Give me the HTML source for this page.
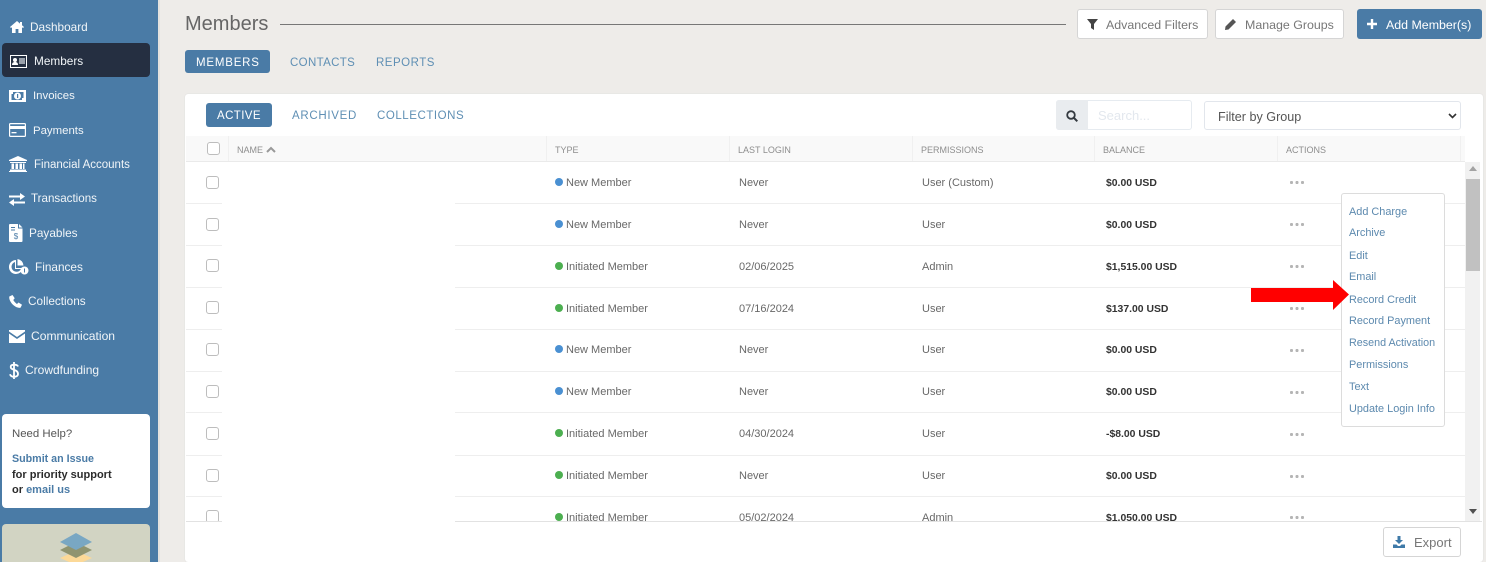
<!DOCTYPE html>
<html><head><meta charset="utf-8"><style>
html,body{margin:0;padding:0}
body{width:1486px;height:562px;overflow:hidden;position:relative;background:#eeece9;font-family:"Liberation Sans",sans-serif;color:#6b6b6b}
.a,.t{position:absolute}
.t{white-space:nowrap;line-height:16px}
svg{position:absolute;overflow:visible}
.nav{color:#f1f5f8;font-size:11.8px}
.tab{font-size:11.5px;color:#5f8fb4}
.cell{font-size:11px;color:#686868}
.bold{font-weight:bold;color:#333;font-size:10.4px;margin-top:1px}
.th{font-size:9px;color:#8e8e8e}
.line{position:absolute;left:186px;width:1279px;height:1px;background:#eeeeee}
.cb{position:absolute;width:11px;height:11px;border:1px solid #bdbdbd;border-radius:3px;background:#fff;left:206px}
.dot{position:absolute;left:555px;width:8px;height:8px;border-radius:50%}
.blue{background:#4a90d2}.green{background:#4caf50}
.dots{position:absolute;left:1290px;width:14px;height:3px;background:radial-gradient(circle at 1.5px 1.5px,#b5b5b5 1.5px,transparent 1.6px) 0 0/5.5px 3px repeat-x}
.m{font-size:10.9px;color:#5c89ae;left:1349px}
.btn{position:absolute;box-sizing:border-box;background:#fff;border:1px solid #d5d5d5;border-radius:3px}
.bt{font-size:12.4px;color:#777}
</style></head><body>
<div class="a" style="left:0;top:0;width:158px;height:562px;background:#4a7ba6"></div>
<div class="a" style="left:158px;top:0;width:2px;height:562px;background:#e4e2df"></div>
<div class="a" style="left:2px;top:43px;width:148px;height:34px;background:#252f41;border-radius:4px"></div>
<svg style="left:10px;top:21px" width="14" height="12" viewBox="0 0 14 12"><path d="M7 0L0 6l1 1 1-.8V12h3.600V8h2.800v4H12V6.200l1 .8 1-1-2-1.700V1h-2v1.600z" fill="#fff"/></svg>
<div class="t nav" style="left:30px;top:19px">Dashboard</div>
<svg style="left:10px;top:55px" width="17" height="13" viewBox="0 0 17 13"><rect x=".5" y=".5" width="16" height="12" fill="#252f41" stroke="#fff"/><circle cx="5" cy="5" r="2" fill="#fff"/><path d="M2 10c0-2 1-3 3-3s3 1 3 3z" fill="#fff"/><path d="M9 3h6v6H9z" fill="#9aa1ab"/></svg>
<div class="t nav" style="left:34px;top:53px">Members</div>
<svg style="left:9px;top:90px" width="17" height="12" viewBox="0 0 17 12"><path fill-rule="evenodd" d="M0 0h17v12H0zM2.500 2v8h12V2z" fill="#fff"/><circle cx="8.500" cy="6" r="3.500" fill="#fff"/><rect x="8" y="4" width="1.200" height="4" fill="#4a7ba6"/><rect x="1" y="1" width="3" height="3" fill="#fff"/><rect x="13" y="8" width="3" height="3" fill="#fff"/></svg>
<div class="t nav" style="left:33px;top:88px;font-size:11.4px">Invoices</div>
<svg style="left:9px;top:123px" width="17" height="14" viewBox="0 0 17 14"><path fill-rule="evenodd" d="M1.500 0h14A1.500 1.500 0 0 1 17 1.500v11a1.500 1.500 0 0 1-1.500 1.500h-14A1.500 1.500 0 0 1 0 12.500v-11A1.500 1.500 0 0 1 1.500 0zM1.200 6v6.800h14.600V6zM1.200 1.200V3h14.600V1.200z" fill="#fff"/><rect x="2.500" y="9" width="5" height="1.300" fill="#fff"/></svg>
<div class="t nav" style="left:33px;top:123px;font-size:11.4px">Payments</div>
<svg style="left:9px;top:156px" width="18" height="16" viewBox="0 0 18 16"><path d="M9 0l9 4v1H0V4zM1 6h16v1H1zM2.500 7.500h2.500v5.500H2.500zM6.500 7.500H9v5.500H6.500zM10.500 7.500H13v5.500h-2.500zM14 7.500h1.500v5.500H14zM1 13.500h16V15H1zM0 15h18v1H0z" fill="#fff"/></svg>
<div class="t nav" style="left:34px;top:157px;font-size:11.5px">Financial Accounts</div>
<svg style="left:9px;top:193px" width="16" height="13" viewBox="0 0 16 13"><path d="M0 2.500h11V0l5 3.500-5 3.500V4.500H0zM16 8.500H5V6L0 9.500 5 13v-2.500h11z" fill="#fff"/></svg>
<div class="t nav" style="left:31px;top:191px;font-size:11.6px">Transactions</div>
<svg style="left:9px;top:224px" width="14" height="18" viewBox="0 0 14 18"><path fill-rule="evenodd" d="M1 0h8v4.500h4.500V17a1 1 0 0 1-1 1H1a1 1 0 0 1-1-1V1a1 1 0 0 1 1-1zM10 0l3.500 3.500H10zM2 3v1h4V3zM2 5.500v1h4v-1z" fill="#fff"/><text x="7" y="15" font-size="8" font-family="Liberation Sans" text-anchor="middle" fill="#4a7ba6">$</text></svg>
<div class="t nav" style="left:29px;top:225px">Payables</div>
<svg style="left:9px;top:259px" width="20" height="16" viewBox="0 0 20 16"><path fill-rule="evenodd" d="M7 1a7 7 0 1 0 6.900 8H7zM6 3v7h6a5 5 0 1 1-6-7z" fill="#fff"/><path d="M8.500 0a7 7 0 0 1 6 6.500h-6z" fill="#fff"/><circle cx="15.500" cy="11.500" r="4" fill="#fff"/><rect x="15" y="9.500" width="1" height="4" fill="#4a7ba6"/></svg>
<div class="t nav" style="left:35px;top:259px">Finances</div>
<svg style="left:9px;top:295px" width="13" height="13" viewBox="0 0 13 13"><path d="M3.500 0L.3 1.500C-.5 6.500 6 13.500 11.500 12.800L13 9.800 9.500 7.500 8 9C7 8.500 4.800 6 4.300 5L5.700 3.300z" fill="#fff"/></svg>
<div class="t nav" style="left:28px;top:293px">Collections</div>
<svg style="left:9px;top:330px" width="16" height="13" viewBox="0 0 16 13"><path d="M0 0h16v1.500L8 7 0 1.500zM0 3.500l8 5.500 8-5.500V13H0z" fill="#fff"/></svg>
<div class="t nav" style="left:31px;top:328px;font-size:12.1px">Communication</div>
<svg style="left:9px;top:362px" width="10" height="17" viewBox="0 0 10 17"><path d="M9 4.500C8.500 3 7 2.700 5 2.700c-2 0-3.300.8-3.300 2.300 0 3.500 7.300 2 7.300 7 0 1.800-1.700 2.800-4 2.800-2 0-3.500-.8-4-2.500M5 0v17" fill="none" stroke="#fff" stroke-width="1.800"/></svg>
<div class="t nav" style="left:25px;top:362px;font-size:12px">Crowdfunding</div>
<div class="a" style="left:2px;top:414px;width:148px;height:94px;background:#fff;border-radius:4px"></div>
<div class="t" style="left:12px;top:426px;font-size:11.4px;color:#555">Need Help?</div>
<div class="t" style="left:12px;top:451px;font-size:10.7px;font-weight:bold;color:#4a7ba6">Submit an Issue</div>
<div class="t" style="left:12px;top:467px;font-size:11px;font-weight:bold;color:#2b2b2b">for priority support</div>
<div class="t" style="left:12px;top:482px;font-size:11px;font-weight:bold;color:#2b2b2b">or <span style="color:#4a7ba6">email us</span></div>
<div class="a" style="left:2px;top:524px;width:148px;height:38px;background:#d2d4c3;border-radius:4px 4px 0 0"></div>
<svg style="left:60px;top:533px" width="32" height="29" viewBox="0 0 32 29"><path d="M8 28l8-4 8 4-8 4z" fill="#bdbdb0"/><path d="M0 25L16 18l16 7-16 7z" fill="#fcd998"/><path d="M0 17L16 9l16 8-16 8z" fill="#8f9470"/><path d="M0 9L16 0l16 9-16 8z" fill="#79a7c3"/></svg>

<div class="t" style="left:185px;top:13px;font-size:20px;line-height:22px;color:#666">Members</div>
<div class="a" style="left:280px;top:24px;width:786px;height:1px;background:#777"></div>
<div class="btn" style="left:1077px;top:9px;width:131px;height:30px"></div>
<svg style="left:1087px;top:19px" width="11" height="11" viewBox="0 0 11 11"><path d="M0 0h11L7 5v6L4 9V5z" fill="#444"/></svg>
<div class="t bt" style="left:1106px;top:17px">Advanced Filters</div>
<div class="btn" style="left:1215px;top:9px;width:129px;height:30px"></div>
<svg style="left:1225px;top:19px" width="11" height="11" viewBox="0 0 11 11"><path d="M8 0l3 3-7.500 7.500L0 11l.5-3.500z" fill="#555"/></svg>
<div class="t bt" style="left:1245px;top:17px">Manage Groups</div>
<div class="a" style="left:1357px;top:9px;width:125px;height:30px;background:#4a7ba6;border-radius:3px"></div>
<svg style="left:1367px;top:19px" width="10" height="10" viewBox="0 0 10 10"><path d="M3.800 0h2.400v3.800H10v2.400H6.200V10H3.800V6.200H0V3.800h3.800z" fill="#fff"/></svg>
<div class="t bt" style="left:1386px;top:17px;color:#fff">Add Member(s)</div>
<div class="a" style="left:185px;top:50px;width:85px;height:23px;background:#4a7ba6;border-radius:3px"></div>
<div class="t tab" style="left:196px;top:55px;color:#fff;letter-spacing:.8px">MEMBERS</div>
<div class="t tab" style="left:290px;top:55px;letter-spacing:.35px">CONTACTS</div>
<div class="t tab" style="left:376px;top:55px;letter-spacing:.5px">REPORTS</div>

<div class="a" style="left:185px;top:94px;width:1298px;height:468px;background:#fff;border-radius:3px;box-shadow:0 0 1px #ccc"></div>
<div class="a" style="left:206px;top:103px;width:66px;height:24px;background:#4a7ba6;border-radius:3px"></div>
<div class="t tab" style="left:217px;top:108px;color:#fff;letter-spacing:.4px">ACTIVE</div>
<div class="t tab" style="left:292px;top:108px;letter-spacing:.7px">ARCHIVED</div>
<div class="t tab" style="left:377px;top:108px;letter-spacing:.55px">COLLECTIONS</div>
<div class="a" style="left:1056px;top:100px;width:136px;height:30px;box-sizing:border-box;border:1px solid #e6ebf0;border-radius:3px;background:#fff"></div>
<div class="a" style="left:1056px;top:100px;width:32px;height:30px;background:#e9ecef;border-radius:3px 0 0 3px"></div>
<svg style="left:1066px;top:110px" width="12" height="12" viewBox="0 0 12 12"><circle cx="5" cy="5" r="3.800" fill="none" stroke="#343a40" stroke-width="1.800"/><path d="M8 8l3.300 3.300" stroke="#343a40" stroke-width="2"/></svg>
<div class="t" style="left:1098px;top:108px;font-size:13px;color:#e3e8ee">Search...</div>
<div class="a" style="left:1204px;top:101px;width:257px;height:29px;box-sizing:border-box;border:1px solid #e2e6ec;border-radius:3px;background:#fff"></div>
<div class="t" style="left:1218px;top:109px;font-size:12.6px;color:#555">Filter by Group</div>
<svg style="left:1448px;top:113px" width="9" height="6" viewBox="0 0 9 6"><path d="M1 1l3.500 3.500L8 1" fill="none" stroke="#333" stroke-width="1.600"/></svg>

<div class="a" style="left:186px;top:136px;width:1279px;height:25px;background:#f9f9f9"></div>
<div class="a" style="left:186px;top:161px;width:1279px;height:1px;background:#eaeaea"></div>
<div class="a" style="left:228px;top:136px;width:1px;height:25px;background:#f0f0f0"></div>
<div class="a" style="left:546px;top:136px;width:1px;height:25px;background:#f0f0f0"></div>
<div class="a" style="left:729px;top:136px;width:1px;height:25px;background:#f0f0f0"></div>
<div class="a" style="left:912px;top:136px;width:1px;height:25px;background:#f0f0f0"></div>
<div class="a" style="left:1094px;top:136px;width:1px;height:25px;background:#f0f0f0"></div>
<div class="a" style="left:1277px;top:136px;width:1px;height:25px;background:#f0f0f0"></div>
<div class="a" style="left:1460px;top:136px;width:1px;height:25px;background:#f0f0f0"></div>
<div class="cb" style="left:207px;top:142px"></div>
<div class="t th" style="left:237px;top:142px">NAME</div>
<svg style="left:266px;top:146px" width="10" height="7" viewBox="0 0 10 7"><path d="M1 6l4-4 4 4" fill="none" stroke="#999" stroke-width="2"/></svg>
<div class="t th" style="left:555px;top:142px">TYPE</div>
<div class="t th" style="left:738px;top:142px">LAST LOGIN</div>
<div class="t th" style="left:921px;top:142px">PERMISSIONS</div>
<div class="t th" style="left:1103px;top:142px">BALANCE</div>
<div class="t th" style="left:1286px;top:142px">ACTIONS</div>

<div class="a" style="left:0;top:0;width:1486px;height:521px;overflow:hidden">
<div class="line" style="top:203px"></div><div class="line" style="top:245px"></div><div class="line" style="top:287px"></div><div class="line" style="top:329px"></div><div class="line" style="top:371px"></div><div class="line" style="top:412px"></div><div class="line" style="top:455px"></div><div class="line" style="top:496px"></div>

<div class="cb" style="top:176px"></div><div class="dot blue" style="top:178px"></div>
<div class="t cell" style="left:566px;top:175px">New Member</div><div class="t cell" style="left:739px;top:175px">Never</div><div class="t cell" style="left:922px;top:175px">User (Custom)</div><div class="t cell bold" style="left:1106px;top:175px">$0.00 USD</div><div class="dots" style="top:181px"></div>

<div class="cb" style="top:218px"></div><div class="dot blue" style="top:220px"></div>
<div class="t cell" style="left:566px;top:217px">New Member</div><div class="t cell" style="left:739px;top:217px">Never</div><div class="t cell" style="left:922px;top:217px">User</div><div class="t cell bold" style="left:1106px;top:217px">$0.00 USD</div><div class="dots" style="top:223px"></div>

<div class="cb" style="top:259px"></div><div class="dot green" style="top:262px"></div>
<div class="t cell" style="left:566px;top:259px">Initiated Member</div><div class="t cell" style="left:739px;top:259px">02/06/2025</div><div class="t cell" style="left:922px;top:259px">Admin</div><div class="t cell bold" style="left:1106px;top:259px">$1,515.00 USD</div><div class="dots" style="top:265px"></div>

<div class="cb" style="top:301px"></div><div class="dot green" style="top:304px"></div>
<div class="t cell" style="left:566px;top:301px">Initiated Member</div><div class="t cell" style="left:739px;top:301px">07/16/2024</div><div class="t cell" style="left:922px;top:301px">User</div><div class="t cell bold" style="left:1106px;top:301px">$137.00 USD</div><div class="dots" style="top:307px"></div>

<div class="cb" style="top:343px"></div><div class="dot blue" style="top:345px"></div>
<div class="t cell" style="left:566px;top:342px">New Member</div><div class="t cell" style="left:739px;top:342px">Never</div><div class="t cell" style="left:922px;top:342px">User</div><div class="t cell bold" style="left:1106px;top:342px">$0.00 USD</div><div class="dots" style="top:349px"></div>

<div class="cb" style="top:385px"></div><div class="dot blue" style="top:387px"></div>
<div class="t cell" style="left:566px;top:384px">New Member</div><div class="t cell" style="left:739px;top:384px">Never</div><div class="t cell" style="left:922px;top:384px">User</div><div class="t cell bold" style="left:1106px;top:384px">$0.00 USD</div><div class="dots" style="top:391px"></div>

<div class="cb" style="top:427px"></div><div class="dot green" style="top:429px"></div>
<div class="t cell" style="left:566px;top:426px">Initiated Member</div><div class="t cell" style="left:739px;top:426px">04/30/2024</div><div class="t cell" style="left:922px;top:426px">User</div><div class="t cell bold" style="left:1106px;top:426px">-$8.00 USD</div><div class="dots" style="top:433px"></div>

<div class="cb" style="top:469px"></div><div class="dot green" style="top:471px"></div>
<div class="t cell" style="left:566px;top:468px">Initiated Member</div><div class="t cell" style="left:739px;top:468px">Never</div><div class="t cell" style="left:922px;top:468px">User</div><div class="t cell bold" style="left:1106px;top:468px">$0.00 USD</div><div class="dots" style="top:475px"></div>

<div class="cb" style="top:510px"></div><div class="dot green" style="top:513px"></div>
<div class="t cell" style="left:566px;top:510px">Initiated Member</div><div class="t cell" style="left:739px;top:510px">05/02/2024</div><div class="t cell" style="left:922px;top:510px">Admin</div><div class="t cell bold" style="left:1106px;top:510px">$1,050.00 USD</div><div class="dots" style="top:516px"></div>
</div>

<div class="a" style="left:186px;top:521px;width:1296px;height:1px;background:#e2e2e2"></div>
<div class="a" style="left:222px;top:165px;width:233px;height:360px;background:#fff"></div>

<div class="a" style="left:1465px;top:162px;width:15px;height:359px;background:#f1f1f1"></div>
<div class="a" style="left:1466px;top:179px;width:14px;height:92px;background:#c1c1c1"></div>
<svg style="left:1469px;top:166px" width="8" height="5" viewBox="0 0 8 5"><path d="M4 0l4 5H0z" fill="#a3a3a3"/></svg>
<svg style="left:1469px;top:509px" width="8" height="5" viewBox="0 0 8 5"><path d="M0 0h8L4 5z" fill="#505050"/></svg>

<div class="a" style="left:1341px;top:193px;width:102px;height:232px;background:#fff;border:1px solid #dcdcdc;border-radius:3px"></div>
<div class="t m" style="top:204px">Add Charge</div>
<div class="t m" style="top:225px">Archive</div>
<div class="t m" style="top:248px">Edit</div>
<div class="t m" style="top:269px">Email</div>
<div class="t m" style="top:292px">Record Credit</div>
<div class="t m" style="top:313px">Record Payment</div>
<div class="t m" style="top:335px;font-size:10.75px">Resend Activation</div>
<div class="t m" style="top:357px">Permissions</div>
<div class="t m" style="top:379px">Text</div>
<div class="t m" style="top:401px">Update Login Info</div>
<svg style="left:1251px;top:280px" width="98" height="30" viewBox="0 0 98 30"><path d="M0 8h82V0l16 14.500L82 30v-8H0z" fill="#f00"/></svg>

<div class="btn" style="left:1383px;top:527px;width:78px;height:30px"></div>
<svg style="left:1393px;top:536px" width="12" height="12" viewBox="0 0 12 12"><path d="M4.500 0h3v4H10L6 8 2 4h2.500zM0 8.500h3.500L5 10h2l1.500-1.500H12V12H0z" fill="#3f7aa8"/></svg>
<div class="t" style="left:1414px;top:535px;font-size:13px;color:#777">Export</div>
</body></html>
